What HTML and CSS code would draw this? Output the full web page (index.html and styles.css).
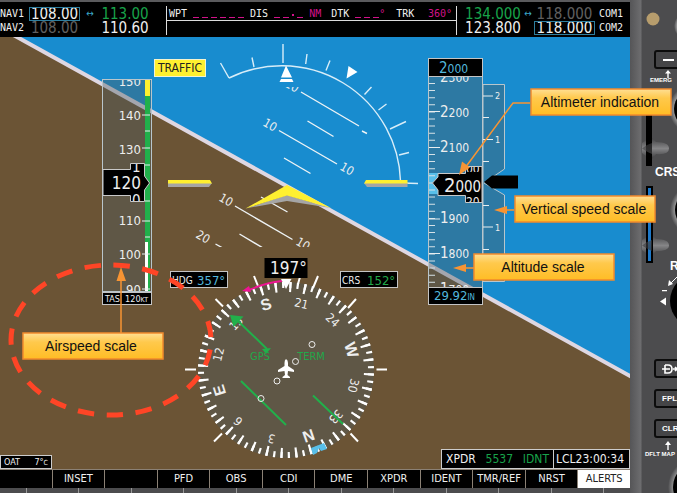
FILE: index.html
```html
<!DOCTYPE html>
<html lang="en">
<head>
<meta charset="utf-8">
<title>Primary flight display</title>
<link rel="stylesheet" href="styles.css">
</head>
<body>
<main class="unit">
  <section class="screen">
    <header class="radios">
      <div class="radio nav">
        <span class="name">NAV1</span><span class="freq tuned">108.00</span><span class="swap">↔</span><span class="freq active">113.00</span>
        <span class="name">NAV2</span><span class="freq idle">108.00</span><span></span><span class="freq">110.60</span>
      </div>
      <div class="route">
        <div class="leg">
          <span>WPT</span>
          <span class="blank"><i></i><i></i><i></i><i></i><i></i><i></i></span>
          <span>DIS</span>
          <span class="blank"><i></i><i></i><i class="dot"></i><i></i></span>
          <span class="value">NM</span>
          <span class="dtk">DTK</span>
          <span class="blank"><i></i><i></i><i></i></span>
          <span class="value">°</span>
          <span class="trk">TRK</span>
          <span class="value track">360°</span>
        </div>
      </div>
      <div class="radio com">
        <span class="freq active">134.000</span><span class="swap">↔</span><span class="freq idle">118.000</span><span class="name">COM1</span>
        <span class="freq">123.800</span><span></span><span class="freq tuned">118.000</span><span class="name">COM2</span>
      </div>
    </header>

    <div class="stage">
    <svg class="display" viewBox="0 37 630 432" role="img" aria-label="Attitude, airspeed, altitude and heading">
      <defs>
        <clipPath id="frame"><rect x="0" y="37" width="630" height="432"/></clipPath>
        <clipPath id="speedClip"><rect x="102" y="80" width="49" height="211"/></clipPath>
        <clipPath id="speedDrum"><rect x="131" y="164" width="13" height="8"/><rect x="131" y="194" width="13" height="7"/></clipPath>
        <clipPath id="altClip"><rect x="428" y="77" width="54" height="210"/></clipPath>
        <clipPath id="altDrum"><rect x="466" y="167" width="15" height="5"/><rect x="466" y="196" width="15" height="6"/></clipPath>
        <clipPath id="pitchClip"><rect x="190" y="87" width="180" height="160"/></clipPath>
        <linearGradient id="note" x1="0" y1="0" x2="0" y2="1"><stop offset="0" stop-color="#ffdf94"/><stop offset=".35" stop-color="#ffc94c"/><stop offset="1" stop-color="#ffbd25"/></linearGradient>
      </defs>

      <g clip-path="url(#frame)">
        <rect class="sky" x="0" y="37" width="630" height="432"/>
        <path class="ground" d="M0 27L17 37L630 376V469H0Z"/>
        <path class="horizon" d="M0 27.6L640 381.5"/>
      </g>

      <!-- bank scale -->
      <g class="line">
        <path d="M229 78A119 119 0 0 1 400.500 181"/>
        <path d="M220.500 63L229 78M252 57.500L254 67M283 44V63M307 54L305.700 64M330 60.500L326 70.500M371.500 87L364.500 94.500M386.500 104L378.500 110M406 121.500L390 129M409 152.500L399 155M402 183L418 183.500"/>
      </g>
      <path class="white" d="M286 65.500L292 77.500H281ZM281 79H292L293.500 82H279.500ZM348.500 66L357.500 72L346.500 78.500Z"/>

      <!-- pitch ladder -->
      <g clip-path="url(#pitchClip)">
        <path class="pitch" d="M301 92L359 126M307.500 121L333.500 136.500M279 130.500L337 164M284 158L310.500 173.500M261 197L287.500 212M235 206L292.500 239.500M239.500 234L263 248M215.500 244L222 247.500M362 131L367 133.500"/>
        <g class="rung">
          <text transform="translate(292 86) rotate(30)" y="4">20</text>
          <text transform="translate(270 125) rotate(30)" y="4">10</text>
          <text transform="translate(347 169) rotate(30)" y="4">10</text>
          <text transform="translate(226 200) rotate(30)" y="4">10</text>
          <text transform="translate(303 244) rotate(30)" y="4">10</text>
          <text transform="translate(203 237) rotate(30)" y="4">20</text>
        </g>
      </g>
      <path class="grey" d="M168 183H212L209 187H168ZM407.500 183H364L367 187H407.500ZM245.500 208.500L287 195L331 208L287 201Z"/>
      <path class="yellow" d="M168 180H210L212 183.500H168ZM407.500 180H366L364 183.500H407.500ZM287 185L331 208L287 195.500L245.500 208.500Z"/>

      <!-- traffic annunciation -->
      <rect class="traffic" x="154.500" y="59.500" width="51" height="17"/>
      <text class="mid t12 ink" x="180" y="72">TRAFFIC</text>

      <!-- airspeed tape -->
      <rect class="tape" x="102.500" y="79.500" width="49" height="212"/>
      <rect class="yellow" x="145" y="80" width="5" height="16"/>
      <rect class="fast" x="145" y="96" width="5" height="195"/>
      <rect class="white" x="145" y="242" width="3" height="49"/>
      <path class="tick" d="M142 115H150M145 131H150M142 148H150M145 165H150M145 201H150M142 221H150M145 237H150M142 254H150M142 289H150"/>
      <g class="scale end" clip-path="url(#speedClip)">
        <text x="141" y="86">150</text><text x="141" y="120">140</text><text x="141" y="154">130</text>
        <text x="141" y="225">110</text><text x="141" y="259">100</text><text x="141" y="294">90</text>
      </g>
      <path class="pointer" d="M103 169.500H130.500V163.500H144.500V176L149.500 183L144.500 190V201.500H130.500V195.500H103Z"/>
      <g class="t15" clip-path="url(#speedDrum)"><text x="132" y="172">1</text><text x="132" y="206">0</text></g>
      <text class="end t17" x="141" y="189">120</text>
      <rect class="box" x="102.500" y="292.500" width="49" height="12"/>
      <text class="t9" x="105" y="302">TAS</text>
      <text class="end t9" x="148" y="302">120<tspan class="t7">KT</tspan></text>

      <!-- altitude tape -->
      <rect class="tape" x="428.500" y="76.500" width="54" height="211"/>
      <rect class="bug" x="429" y="173" width="9" height="21"/>
      <path class="altMinor" d="M432 83V286"/>
      <path class="tick" d="M429 111.500H440M429 147.500H440M429 219H440M429 253.500H440"/>
      <g clip-path="url(#altClip)" class="alt">
        <text x="440" y="82">2<tspan class="t12">300</tspan></text>
        <text x="440" y="117">2<tspan class="t12">200</tspan></text>
        <text x="440" y="152">2<tspan class="t12">100</tspan></text>
        <text x="440" y="223">1<tspan class="t12">900</tspan></text>
        <text x="440" y="258">1<tspan class="t12">800</tspan></text>
        <text x="440" y="294">1<tspan class="t12">700</tspan></text>
      </g>
      <path class="pointer" d="M438 173.500H465.500V166.500H482V202.500H465.500V195.500H438V190L432.500 183L438 177Z"/>
      <g clip-path="url(#altDrum)"><text class="t12" x="466" y="173">00</text><text class="t12" x="466" y="206">20</text></g>
      <text class="t20" x="444" y="192">2<tspan class="t15">000</tspan></text>
      <rect class="box" x="428.500" y="58.500" width="54" height="18"/>
      <text class="t15 cyan" x="439" y="73">2<tspan class="t12">000</tspan></text>
      <rect class="box" x="428.500" y="287.500" width="54" height="17"/>
      <text class="t13 cyan" x="434" y="300">29.92<tspan class="t8">IN</tspan></text>

      <!-- vertical speed -->
      <path class="tape" d="M483 84.500H504.500V169L484 183L504.500 195V281.500H483Z"/>
      <path class="tick" d="M483 96H493M483 117.500H489M483 139.500H493M483 161.500H489M483 205.500H489M483 227H493M483 249.500H489"/>
      <g class="t9"><text x="495" y="99">2</text><text x="495" y="143">1</text><text x="495" y="231">1</text></g>
      <path d="M484 182L492 175.500H518V188.500H492Z"/>

      <!-- compass rose -->
      <circle class="tape plain" cx="286" cy="370" r="88"/>
      <circle class="ring fine" cx="286" cy="370" r="85" pathLength="72" transform="rotate(3 286 370)"/>
      <circle class="ring coarse" cx="286" cy="370" r="83" pathLength="36" transform="rotate(3 286 370)"/>
      <path class="lubber" d="M215.500 299L223 306.500M254 276L258 286M318 276L313 288M300 277L298 284M356 299L348 308M222 433.500L214 441.500M350.500 433.500L358 441.500M185 369.500H196M376.500 369.500H387"/>
      <g class="rose" transform="translate(286 370)">
        <text class="cardinal" transform="rotate(-17)" y="-63">S</text>
        <text transform="rotate(13)" y="-64">21</text>
        <text transform="rotate(43)" y="-64">24</text>
        <text class="cardinal" transform="rotate(73)" y="-63">W</text>
        <text transform="rotate(103)" y="-65">30</text>
        <text transform="rotate(133)" y="-64">33</text>
        <text class="cardinal" transform="rotate(161)" y="-64">N</text>
        <text transform="rotate(192)" y="-66">3</text>
        <text transform="rotate(223)" y="-66">6</text>
        <text class="cardinal" transform="rotate(253)" y="-64">E</text>
        <text transform="rotate(283)" y="-65">12</text>
        <text transform="rotate(313)" y="-64">15</text>
      </g>
      <path class="bug" d="M311 448L324 443L327 449L321 451L319 448L317 453L313 455Z"/>
      <path class="turn" d="M249 290Q265 283 282 281"/>
      <path class="magenta" d="M242 291L249 286L251 292Z"/>
      <g class="course">
        <path d="M238 321L267 349M241 381L286 425M313 395.500L343 424"/>
        <path class="solid" d="M230 315L243.500 316.500L233.500 327ZM262 349L271 348L266 354Z"/>
      </g>
      <text class="mid t11 green" x="260" y="360">GPS</text>
      <text class="mid t11 green" x="311" y="360">TERM</text>
      <g class="dots"><circle cx="312" cy="344.500" r="3"/><circle cx="295.500" cy="361.500" r="3"/><circle cx="277" cy="381" r="3"/><circle cx="261" cy="398.500" r="3"/></g>
      <path class="white" d="M286 359Q288 360 288 363V366L294 370V372L288 371L287.500 375L290 377V378H282.500V377L285 375L284.500 371L278 372V370L284.500 366V363Q284.500 360 286 359Z"/>

      <rect x="264.500" y="258" width="43" height="20"/>
      <text class="t17" x="270" y="274">197°</text>
      <path class="white" d="M281 279H291.500L286 289Z"/>
      <rect class="box" x="170.500" y="271.500" width="57" height="16"/>
      <text class="t10" x="172" y="284">HDG</text><text class="t13 cyan" x="197" y="285">357°</text>
      <rect class="box" x="340.500" y="271.500" width="57" height="16"/>
      <text class="t10" x="342" y="284">CRS</text><text class="t13 green" x="367" y="285">152°</text>

      <!-- callouts -->
      <ellipse class="mark" cx="111" cy="340" rx="100" ry="75" pathLength="570"/>
      <g class="arrow">
        <path d="M121 333V278M530 103H513L465 168M514 210H502M474 268H462"/>
        <path class="head" d="M121 267L126 281H116.500ZM459 175L462 161.500L470 167.500ZM494 210L507 206V214ZM453 268L466 264V272Z"/>
      </g>
      <g class="callout">
        <rect x="531" y="89" width="140" height="26"/><text x="600" y="107">Altimeter indication</text>
        <rect x="515" y="196" width="140" height="26"/><text x="584" y="214">Vertical speed scale</text>
        <rect x="474" y="254" width="140" height="26"/><text x="543" y="272">Altitude scale</text>
        <rect x="23" y="333" width="140" height="26"/><text x="91" y="351">Airspeed scale</text>
      </g>
    </svg>

    <div class="status">
      <div class="cell oat"><span>OAT</span><span>7°<small>C</small></span></div>
      <div class="cell xpdr"><span>XPDR</span><span class="active">5537</span><span class="active">IDNT</span></div>
      <div class="cell clock">LCL23:00:34</div>
    </div>
    </div>

    <nav class="softkeys" aria-label="Softkeys">
      <button></button><button>INSET</button><button></button><button>PFD</button><button>OBS</button><button>CDI</button><button>DME</button><button>XPDR</button><button>IDENT</button><button>TMR/REF</button><button>NRST</button><button class="lit">ALERTS</button>
    </nav>
    <div class="leads"><i></i><i></i><i></i><i></i><i></i><i></i><i></i><i></i><i></i><i></i><i></i><i></i></div>
  </section>

  <aside class="bezel">
    <svg class="panel" width="47" height="493" viewBox="630 0 47 493">
      <defs>
        <radialGradient id="glow"><stop offset=".75" stop-color="#aaa"/><stop offset="1" stop-color="#4c4c4e"/></radialGradient>
        <linearGradient id="knob" x1="0" y1="0" x2="0" y2="1"><stop offset="0" stop-color="#3c3c3e"/><stop offset=".5" stop-color="#858587"/><stop offset="1" stop-color="#343436"/></linearGradient>
      </defs>
      <circle cx="653" cy="19" r="6.500" fill="#b79d6d"/>
      <circle cx="688" cy="26" r="14" fill="url(#glow)"/>
      <circle cx="694" cy="109" r="25" fill="url(#glow)"/><circle cx="694" cy="109" r="20"/><circle cx="694" cy="109" r="16" fill="#39393b"/>
      <path fill="url(#knob)" d="M642 143L651 137L656 142Q669 142 669 148.500Q669 155 656 154L651 160L642 153Z"/>
      <rect x="646" y="112" width="6" height="54"/>
      <path fill="url(#knob)" d="M642 240L651 234L656 239Q669 239 669 245.500Q669 251 656 251L651 257L642 250Z"/>
      <rect x="646" y="186" width="7" height="77"/><rect x="648" y="188" width="3" height="73" fill="#1d78c8"/>
      <path fill="url(#knob)" opacity=".65" d="M642 148.500Q647 144 652 143V154Q647 152 642 148.500ZM642 245.500Q647 241 652 240V251Q647 249 642 245.500Z"/>
      <circle cx="696" cy="210" r="26" fill="url(#glow)"/><circle cx="696" cy="210" r="21"/>
      <circle cx="697" cy="301" r="27"/><circle cx="699" cy="301" r="22" fill="#777"/>
      <circle cx="697" cy="487" r="29" fill="url(#glow)"/><circle cx="697" cy="487" r="24"/><circle cx="697" cy="487" r="20" fill="#333"/>
      <g fill="#fff">
        <path d="M660 301.500L666 297.500V305.500ZM662 290H667V291.200H662ZM668 286L669 280L673 284Z"/>
        <path d="M668 70L671 73.500H668.700V78H667.300V73.500H665ZM668 441L671 445H668.700V450H667.300V445H665Z"/>
      </g>
      <path d="M671 283L677 277" stroke="#fff"/>
      <text class="tiny" x="650" y="82">EMERG</text>
      <text class="panelText" x="655" y="176">CRS</text>
      <text class="panelText" x="670" y="270">R</text>
      <text class="tiny" x="645" y="456">DFLT MAP</text>
    </svg>
    <div class="keys">
      <button aria-label="Range minus"><svg width="12" height="14" viewBox="0 0 12 14"><path d="M1 7H12" stroke="#fff" stroke-width="2"/></svg></button>
      <div class="pad">
        <button aria-label="Direct to"><svg width="16" height="12" viewBox="0 0 16 12"><path d="M3 2H6Q10 2 10 6T6 10H3V2M0 6H8M11 6H15M13 4L15 6L13 8" fill="none" stroke="#fff" stroke-width="1.6"/></svg></button>
        <button>FPL</button>
        <button>CLR</button>
      </div>
    </div>
  </aside>
</main>
</body>
</html>
```
FILE: styles.css
```css
* { box-sizing: border-box; }
body { margin: 0; background: #4c4c4e; overflow-x: hidden; }
i { font-style: normal; }

.unit {
  display: flex;
  min-height: 100vh;
  overflow: hidden;
  color: #f0f0f0;
  font-family: "DejaVu Sans Condensed", "DejaVu Sans", sans-serif;
}
.screen { flex: 1; min-width: 0; position: relative; z-index: 1; }

/* radio bar */
.radios {
  display: grid;
  grid-template-columns: 166px 1fr 173px;
  height: 37px;
  border-top: 2px solid #5b5b5d;
  background: #000;
}
.radio {
  display: grid;
  grid-template-rows: 14px 14px;
  align-items: center;
  padding-top: 5px;
  line-height: 14px;
}
.nav { grid-template-columns: 29px 51px 20px 50px; align-content: start; }
.com { grid-template-columns: 58px 12px 61px 1fr; align-content: start; padding-left: 7px; }
.name { font: 10px/14px "DejaVu Sans Mono", monospace; }
.com .name { padding-left: 4px; }
.freq { font-size: 15px; text-align: center; }
.swap { color: #3aa5c8; font-size: 10px; text-align: center; }
.active { color: #18a34a; }
.idle { color: #606060; }
.tuned { outline: 1px solid #2f7f9f; outline-offset: -1px; }

.route {
  margin: 4px 0 2px;
  border: solid #ddd;
  border-width: 0 1px;
}
.leg {
  display: flex;
  height: 15px;
  padding: 0 4px 0 2px;
  border-bottom: 1px solid #ddd;
  font: 10px/16px "DejaVu Sans Mono", monospace;
}
.blank { display: flex; align-items: flex-end; gap: 3px; padding: 0 6px 2px; }
.blank i { width: 6px; height: 1px; background: #d3128a; }
.blank .dot { width: 2px; height: 2px; margin-bottom: 2px; }
.value { color: #d3128a; }
.dtk { padding-left: 10px; }
.dtk + .blank { padding-right: 0; }
.trk { padding-left: 11px; }
.track { margin-left: auto; }

/* flight display */
.stage { position: relative; }
.display { display: block; width: 100%; height: auto; overflow: visible; }
.display text { fill: #eee; }
.sky { fill: #188ccf; }
.ground { fill: #6b5435; }
.horizon { stroke: #ded7e2; stroke-width: 4; }
.line { fill: none; stroke: #d8edf8; stroke-width: 1.4; }
.pitch { stroke: #eef3f5; stroke-width: 1.4; }
.rung { font-size: 12px; text-anchor: middle; }
.white { fill: #fff; }
.yellow { fill: #fff030; }
.grey { fill: #a5a5a5; }
.fast { fill: #21b04b; }
.magenta { fill: #ef1494; }
.bug { fill: #58bfe9; }
.traffic { fill: #fff030; stroke: #f4f4d0; }
.tape { fill: #4e5c62; fill-opacity: .4; stroke: #b9c6cc; stroke-width: 1; }
.plain { stroke: none; }
.tick { stroke: #e8eef0; stroke-width: 1.2; }
.altMinor { stroke: #d5e2e8; stroke-width: 6; stroke-dasharray: 1 6.1; }
.box { fill: #000; stroke: #c4c4c4; }
.pointer { fill: #000; stroke: #c9c9c9; }
.scale { font-size: 13px; }
.alt { font-size: 15px; }
.end { text-anchor: end; }
.mid { text-anchor: middle; }
.t7 { font-size: 7px; }
.t8 { font-size: 8px; }
.t9 { font-size: 9px; }
.t10 { font-size: 10px; }
.t11 { font-size: 11px; }
.t12 { font-size: 12px; }
.t13 { font-size: 13px; }
.t15 { font-size: 15px; }
.t17 { font-size: 17px; }
.t20 { font-size: 20px; }
.display .ink { fill: #222; }
.display .cyan { fill: #52b7dc; }
.display .green { fill: #22a84a; }
.ring { fill: none; stroke: #fff; }
.fine { stroke-width: 6; stroke-dasharray: .3 .7; stroke-dashoffset: .15; }
.coarse { stroke-width: 10; stroke-dasharray: .15 .85; stroke-dashoffset: .075; }
.lubber { stroke: #fff; stroke-width: 2; }
.rose { font-size: 12px; text-anchor: middle; }
.cardinal { font: bold 16px "Liberation Sans", sans-serif; }
.turn { fill: none; stroke: #ef1494; stroke-width: 2; }
.course { stroke: #21b04b; stroke-width: 2; }
.solid { fill: #21b04b; stroke: none; }
.dots { fill: none; stroke: #eee; }
.mark { fill: none; stroke: #ff4526; stroke-width: 5; stroke-dasharray: 17 13; stroke-dashoffset: -10; }
.arrow { fill: none; stroke: #f79433; stroke-width: 1.5; }
.head { fill: #f79433; stroke: none; }
.callout rect { fill: url(#note); stroke: #f28a2c; stroke-width: 1.5; }
.callout text { fill: #111; font: 14px "Liberation Sans", sans-serif; text-anchor: middle; }

/* status strip laid over the display's lower edge */
.status {
  position: absolute;
  inset: auto 0 0;
  display: flex;
  align-items: flex-end;
  font-size: 12px;
}
.cell {
  display: flex;
  align-items: center;
  justify-content: space-between;
  height: 20px;
  padding: 0 4px;
  border: 1px solid #ccc;
  background: #000;
  white-space: nowrap;
}
.oat { width: 52px; height: 14px; margin-right: auto; padding: 0 3px; font-size: 9px; }
.oat small { font-size: 7px; }
.xpdr { width: 113px; }
.clock { width: 76px; padding: 0 2px; border-left: 0; }

.softkeys {
  display: grid;
  grid-template-columns: repeat(12, 1fr);
  gap: 1px;
  height: 19px;
  padding-top: 1px;
  background: #8b8175;
}
.softkeys button {
  min-width: 0;
  padding: 0;
  border: 0;
  background: #000;
  color: #f0f0f0;
  font: 11px/18px "DejaVu Sans Condensed", "DejaVu Sans", sans-serif;
}
.softkeys .lit { background: #fff; color: #222; }
.leads { display: flex; justify-content: space-around; height: 5px; background: #4c4c4e; }
.leads i { width: 1px; background: #999; }

/* bezel */
.bezel {
  flex: 0 0 47px;
  display: grid;
  overflow: hidden;
  background: linear-gradient(90deg, #555557, #6d6d6f 11px, #4c4c4e 12px);
}
.panel, .keys { grid-area: 1 / 1; }
.panel text { fill: #fff; font-family: "Liberation Sans", sans-serif; font-weight: bold; }
.tiny { font-size: 6px; }
.panelText { font-size: 12px; }
.keys { padding: 50px 0 0 24px; }
.pad { display: grid; gap: 11px; margin-top: 290px; }
.keys button {
  display: flex;
  align-items: center;
  width: 30px;
  height: 19px;
  padding: 0 0 0 6px;
  border: 2px solid #0c0c0c;
  border-radius: 3px;
  background: #454547;
  color: #fff;
  font: bold 8px "Liberation Sans", sans-serif;
}
```
